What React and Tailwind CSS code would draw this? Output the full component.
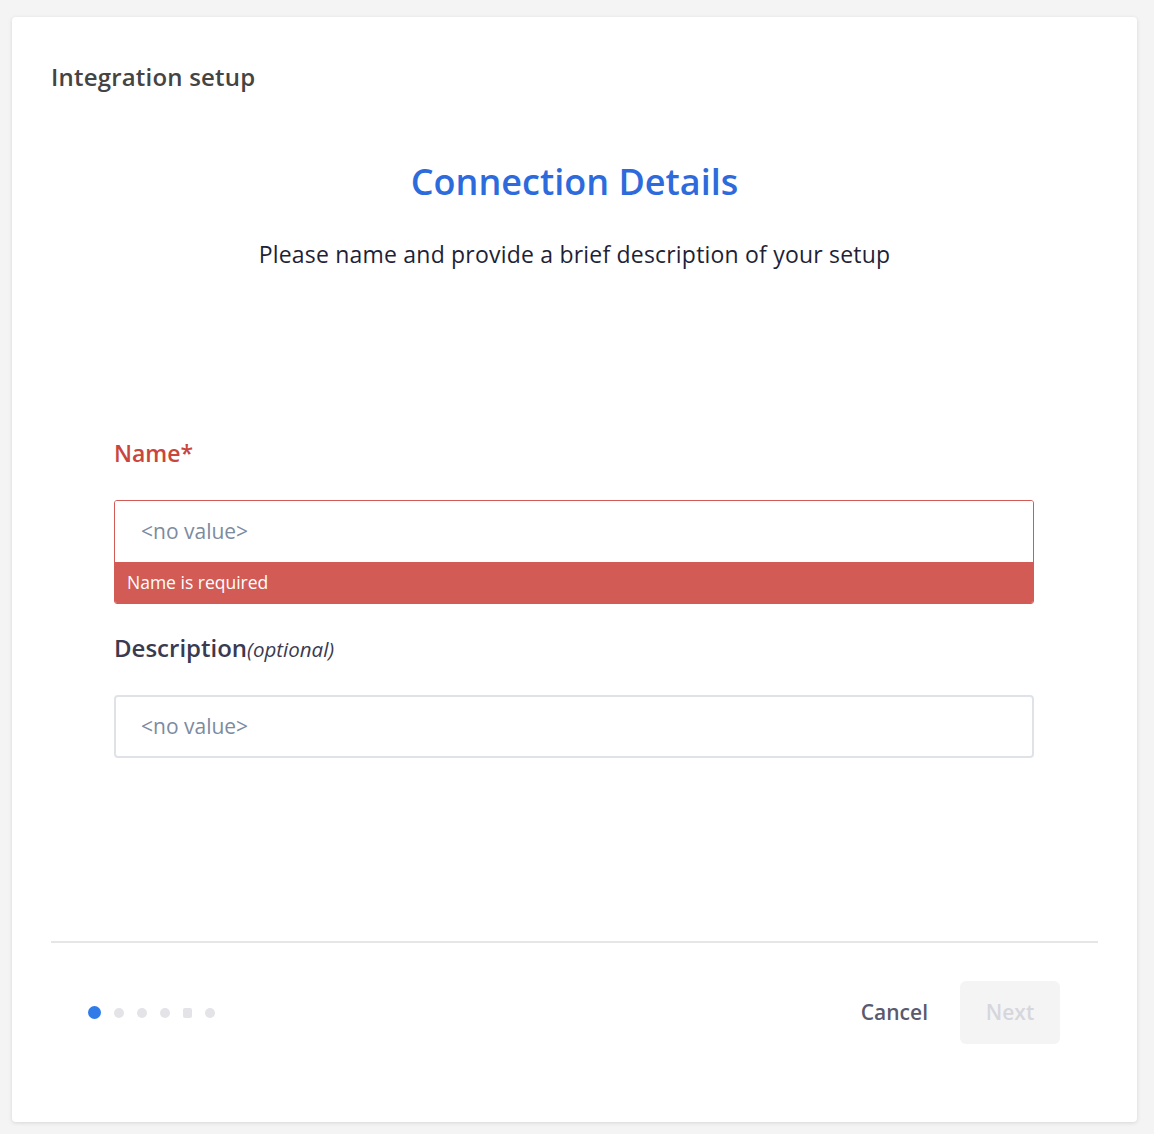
export default function App() {
  const dots = [0, 1, 2, 3, 4, 5];

  return (
    <div className="min-h-[1134px] w-full bg-[#f4f4f4] px-[12px] pt-[17px] pb-[12px] font-['Open_Sans',_'Lato',_sans-serif]">
      <div className="flex h-[1105px] w-[1125px] flex-col rounded-[4px] bg-white shadow-[0_1px_4px_rgba(0,0,0,0.12)]">
        <div className="px-[39px] pt-[45px]">
          <p className="text-[24px] font-semibold leading-[30px] tracking-[0.2px] text-[#444444]">Integration setup</p>
        </div>

        <div className="mt-[68px] flex flex-col items-center">
          <h1 className="text-[36px] font-semibold leading-[44px] text-[#2d6bdc]">Connection Details</h1>
          <p className="mt-[35px] text-[23px] leading-[30px] tracking-[0.2px] text-[#1f1f38]">
            Please name and provide a brief description of your setup
          </p>
        </div>

        <div className="mt-[169px] pl-[102px] pr-[103px]">
          <label className="block text-[23px] font-semibold leading-[30px] text-[#c9463d]">Name*</label>
          <div className="mt-[32px] overflow-hidden rounded-[3px] border border-[#d25b55]">
            <div className="flex h-[61px] items-center bg-white px-[26px] text-[21px] text-[#7c8ba0]">
              &lt;no value&gt;
            </div>
            <div className="flex h-[41px] items-center bg-[#d25b55] px-[12px] text-[17.5px] text-white">
              Name is required
            </div>
          </div>

          <label className="mt-[27px] block text-[23px] leading-[34px] text-[#3a3a50]">
            <span className="text-[24px] font-semibold">Description</span>
            <span className="text-[20.5px] italic">(optional)</span>
          </label>
          <div className="mt-[29px] flex h-[63px] items-center rounded-[4px] border-2 border-[#dfe3e8] bg-white px-[25px] text-[21px] text-[#7c8ba0]">
            &lt;no value&gt;
          </div>
        </div>

        <div className="mx-[39px] mt-auto border-t-2 border-[#e6e6e6]" />

        <div className="flex items-center justify-between pt-[38px] pb-[78px] pl-[76px] pr-[77px]">
          <div className="flex items-center gap-[13px]">
            {dots.map((d) =>
              d === 0 ? (
                <span key={d} className="h-[13px] w-[13px] rounded-full bg-[#2f7be8]" />
              ) : d === 4 ? (
                <span key={d} className="h-[10px] w-[9px] rounded-[2px] bg-[#e3e3e8]" />
              ) : (
                <span key={d} className="h-[10px] w-[10px] rounded-full bg-[#e3e3e8]" />
              )
            )}
          </div>
          <div className="flex items-center gap-[32px]">
            <button className="text-[21px] font-semibold text-[#5a5a6e]">Cancel</button>
            <button className="h-[63px] w-[100px] rounded-[6px] bg-[#f4f4f5] text-[21px] font-semibold text-[#d6d6dd]">
              Next
            </button>
          </div>
        </div>
      </div>
    </div>
  );
}
